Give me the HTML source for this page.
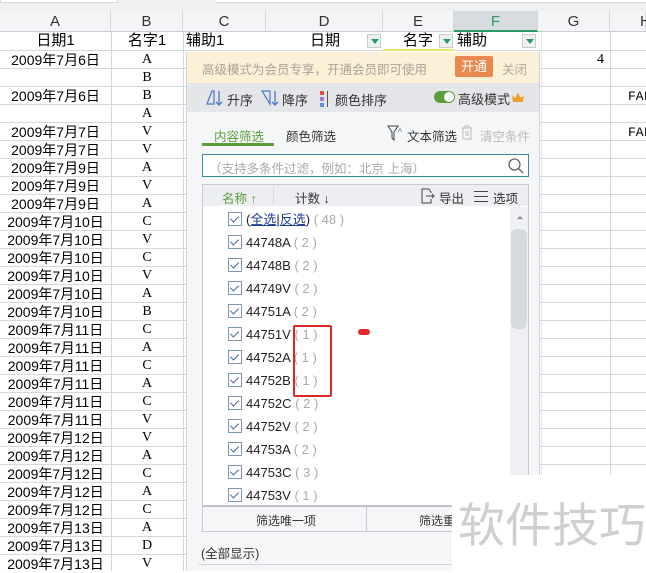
<!DOCTYPE html>
<html><head><meta charset="utf-8"><style>
*{margin:0;padding:0;box-sizing:border-box}
body{width:646px;height:571px;overflow:hidden;background:#fff;position:relative;font-family:"Liberation Sans","Noto Sans CJK SC",sans-serif;color:#000}
.a{position:absolute}
.top{left:0;top:0;width:646px;height:11px;background:#eef0f2}
.colh{top:11px;height:21px;background:#f4f5f7;border-right:1px solid #d6d8dc;border-bottom:1px solid #c9ccd2;font-size:15px;text-align:center;line-height:21px;color:#333}
.vl{top:32px;width:1px;height:539px;background:#d4d7dd}
.hl{left:0;width:646px;height:1px;background:#d4d7dd}
.cell{font-family:"Liberation Serif","Noto Serif CJK SC",serif;font-size:15px;line-height:18px;height:18px}
.d{left:0;width:111px;text-align:center;font-family:"Liberation Sans","Noto Sans CJK SC",sans-serif;font-size:14px}
.b{left:111px;width:72px;text-align:center;font-family:"Liberation Serif",serif;font-size:14px}
.h1{font-family:"Liberation Sans","Noto Sans CJK SC",sans-serif;font-size:15px}
.dd{width:14px;height:14px;background:#eef0f2;border:1px solid #c8ccd2}
.dd:after{content:"";position:absolute;left:3px;top:4px;border-left:4px solid transparent;border-right:4px solid transparent;border-top:5px solid #2a9a6a}
.panel{left:186px;top:52px;width:354px;height:519px;background:#f5f6f8;border-left:1px solid #d0d3d8;border-right:1px solid #d0d3d8;font-size:12.5px;color:#333}
.row{left:30px;height:23px;line-height:23px;font-size:13px;color:#222}
.cb{position:absolute;left:0;top:4px;width:14px;height:14px;border:1px solid #7e95b6;background:#fff}
.cb:after{content:"";position:absolute;left:3px;top:1px;width:4px;height:7px;border-right:1.6px solid #3f6ba8;border-bottom:1.6px solid #3f6ba8;transform:rotate(45deg)}
.row span.t{position:absolute;left:18px;white-space:nowrap}
.g{color:#aaa}
</style></head><body>
<div class="a top"></div>
<div class="a" style="left:0;top:0;width:118px;height:3px;background:#fff;border:1px solid #d6d8dc;border-top:0"></div>
<div class="a" style="left:216px;top:0;width:430px;height:3px;background:#fff;border-bottom:1px solid #d6d8dc"></div>

<div class="a colh" style="left:0;width:111px">A</div>
<div class="a colh" style="left:111px;width:72px">B</div>
<div class="a colh" style="left:183px;width:83px">C</div>
<div class="a colh" style="left:266px;width:117px">D</div>
<div class="a colh" style="left:383px;width:71px">E</div>
<div class="a colh" style="left:454px;width:84px;background:#d8dbe0;color:#2a9a6a;border-bottom:2px solid #2a9a6a">F</div>
<div class="a colh" style="left:538px;width:72px">G</div>
<div class="a colh" style="left:610px;width:36px;text-align:left;padding-left:30px">H</div>

<div class="a vl" style="left:111px"></div>
<div class="a vl" style="left:183px"></div>
<div class="a vl" style="left:610px"></div>
<div class="a vl" style="left:541px;background:#e6e8ec"></div>

<div class="a hl" style="top:50px"></div><div class="a hl" style="top:68px"></div><div class="a hl" style="top:86px"></div><div class="a hl" style="top:104px"></div><div class="a hl" style="top:122px"></div><div class="a hl" style="top:140px"></div><div class="a hl" style="top:158px"></div><div class="a hl" style="top:176px"></div><div class="a hl" style="top:194px"></div><div class="a hl" style="top:212px"></div><div class="a hl" style="top:230px"></div><div class="a hl" style="top:248px"></div><div class="a hl" style="top:266px"></div><div class="a hl" style="top:284px"></div><div class="a hl" style="top:302px"></div><div class="a hl" style="top:320px"></div><div class="a hl" style="top:338px"></div><div class="a hl" style="top:356px"></div><div class="a hl" style="top:374px"></div><div class="a hl" style="top:392px"></div><div class="a hl" style="top:410px"></div><div class="a hl" style="top:428px"></div><div class="a hl" style="top:446px"></div><div class="a hl" style="top:464px"></div><div class="a hl" style="top:482px"></div><div class="a hl" style="top:500px"></div><div class="a hl" style="top:518px"></div><div class="a hl" style="top:536px"></div><div class="a hl" style="top:554px"></div>

<div class="a cell h1" style="left:0;width:111px;top:32px;text-align:center">日期1</div>
<div class="a cell h1" style="left:111px;width:72px;top:32px;text-align:center">名字1</div>
<div class="a cell h1" style="left:186px;top:32px">辅助1</div>
<div class="a cell h1" style="left:310px;top:32px">日期</div>
<div class="a dd" style="left:367px;top:34px"></div>
<div class="a cell h1" style="left:403px;top:32px">名字</div>
<div class="a dd" style="left:439px;top:34px"></div>
<div class="a" style="left:383px;top:49px;width:71px;height:2px;background:#e8e86a"></div>
<div class="a cell h1" style="left:457px;top:32px">辅助</div>
<div class="a dd" style="left:522px;top:34px"></div>

<div class="a cell" style="left:597px;top:51px;font-size:14px">4</div>
<div class="a cell" style="left:628px;top:88px;font-family:'Liberation Mono',monospace;font-size:13px">FAL</div>
<div class="a cell" style="left:628px;top:124px;font-family:'Liberation Mono',monospace;font-size:13px">FAL</div>

<div class="a cell d" style="top:51px">2009年7月6日</div><div class="a cell b" style="top:51px">A</div>
<div class="a cell b" style="top:69px">B</div>
<div class="a cell d" style="top:87px">2009年7月6日</div><div class="a cell b" style="top:87px">B</div>
<div class="a cell b" style="top:105px">A</div>
<div class="a cell d" style="top:123px">2009年7月7日</div><div class="a cell b" style="top:123px">V</div>
<div class="a cell d" style="top:141px">2009年7月7日</div><div class="a cell b" style="top:141px">V</div>
<div class="a cell d" style="top:159px">2009年7月9日</div><div class="a cell b" style="top:159px">A</div>
<div class="a cell d" style="top:177px">2009年7月9日</div><div class="a cell b" style="top:177px">V</div>
<div class="a cell d" style="top:195px">2009年7月9日</div><div class="a cell b" style="top:195px">A</div>
<div class="a cell d" style="top:213px">2009年7月10日</div><div class="a cell b" style="top:213px">C</div>
<div class="a cell d" style="top:231px">2009年7月10日</div><div class="a cell b" style="top:231px">V</div>
<div class="a cell d" style="top:249px">2009年7月10日</div><div class="a cell b" style="top:249px">C</div>
<div class="a cell d" style="top:267px">2009年7月10日</div><div class="a cell b" style="top:267px">V</div>
<div class="a cell d" style="top:285px">2009年7月10日</div><div class="a cell b" style="top:285px">A</div>
<div class="a cell d" style="top:303px">2009年7月10日</div><div class="a cell b" style="top:303px">B</div>
<div class="a cell d" style="top:321px">2009年7月11日</div><div class="a cell b" style="top:321px">C</div>
<div class="a cell d" style="top:339px">2009年7月11日</div><div class="a cell b" style="top:339px">A</div>
<div class="a cell d" style="top:357px">2009年7月11日</div><div class="a cell b" style="top:357px">C</div>
<div class="a cell d" style="top:375px">2009年7月11日</div><div class="a cell b" style="top:375px">A</div>
<div class="a cell d" style="top:393px">2009年7月11日</div><div class="a cell b" style="top:393px">C</div>
<div class="a cell d" style="top:411px">2009年7月11日</div><div class="a cell b" style="top:411px">V</div>
<div class="a cell d" style="top:429px">2009年7月12日</div><div class="a cell b" style="top:429px">V</div>
<div class="a cell d" style="top:447px">2009年7月12日</div><div class="a cell b" style="top:447px">A</div>
<div class="a cell d" style="top:465px">2009年7月12日</div><div class="a cell b" style="top:465px">C</div>
<div class="a cell d" style="top:483px">2009年7月12日</div><div class="a cell b" style="top:483px">A</div>
<div class="a cell d" style="top:501px">2009年7月12日</div><div class="a cell b" style="top:501px">C</div>
<div class="a cell d" style="top:519px">2009年7月13日</div><div class="a cell b" style="top:519px">A</div>
<div class="a cell d" style="top:537px">2009年7月13日</div><div class="a cell b" style="top:537px">D</div>
<div class="a cell d" style="top:555px">2009年7月13日</div><div class="a cell b" style="top:555px">V</div>

<div class="a panel">
  <div class="a" style="left:0;top:0;width:352px;height:31px;background:#fcf1d6"></div>
  <div class="a" style="left:15px;top:7px;font-size:12.5px;color:#a9a39a">高级模式为会员专享，开通会员即可使用</div>
  <div class="a" style="left:268px;top:4px;width:38px;height:21px;background:#e9884f;color:#fff;border-radius:2px;text-align:center;line-height:21px;font-size:13px">开通</div>
  <div class="a" style="left:315px;top:7px;color:#b0aaa0;font-size:12.5px">关闭</div>

  <div class="a" style="left:0;top:31px;width:352px;height:29px;background:#e4e6ea"></div>
  <svg class="a" style="left:18px;top:36px" width="20" height="20" viewBox="0 0 20 20"><path d="M2 16 L7 3 L9 3 L9 16 Z" fill="none" stroke="#4b78c0" stroke-width="1.2"/><path d="M14 3 V17 M11 14 L14 17 L17 14" fill="none" stroke="#4b78c0" stroke-width="1.3"/></svg>
  <div class="a" style="left:40px;top:38px;font-size:13px">升序</div>
  <svg class="a" style="left:74px;top:36px" width="20" height="20" viewBox="0 0 20 20"><path d="M1 3 H9 V16 Z" fill="none" stroke="#4b78c0" stroke-width="1.2"/><path d="M14 3 V17 M11 14 L14 17 L17 14" fill="none" stroke="#4b78c0" stroke-width="1.3"/></svg>
  <div class="a" style="left:95px;top:38px;font-size:13px">降序</div>
  <div class="a" style="left:133px;top:39px;width:4px;height:4px;background:#e05050"></div>
  <div class="a" style="left:133px;top:45px;width:4px;height:4px;background:#9a7fd0"></div>
  <div class="a" style="left:133px;top:51px;width:4px;height:4px;background:#6090e0"></div>
  <div class="a" style="left:140px;top:39px;width:1px;height:16px;background:#555"></div>
  <div class="a" style="left:148px;top:38px;font-size:13px">颜色排序</div>
  <div class="a" style="left:247px;top:39px;width:21px;height:12px;border-radius:6px;background:#5a9e3a"></div>
  <div class="a" style="left:257px;top:40px;width:10px;height:10px;border-radius:5px;background:#fff"></div>
  <div class="a" style="left:271px;top:37px;font-size:13px">高级模式</div>
  <svg class="a" style="left:324px;top:40px" width="14" height="11" viewBox="0 0 14 11"><path d="M1 3 L4 6 L7 1 L10 6 L13 3 L12 10 H2 Z" fill="#f0a030"/></svg>

  <div class="a" style="left:27px;top:74px;font-size:12.5px;color:#5a9e3a">内容筛选</div>
  <div class="a" style="left:15px;top:91px;width:72px;height:3px;background:#5a9e3a"></div>
  <div class="a" style="left:99px;top:74px;font-size:12.5px">颜色筛选</div>
  <svg class="a" style="left:200px;top:72px" width="16" height="18" viewBox="0 0 16 18"><path d="M1 2 H11 L7 8 V16 L5 14 V8 Z" fill="none" stroke="#444" stroke-width="1"/><text x="11" y="8" font-size="6" fill="#4b78c0">A</text></svg>
  <div class="a" style="left:220px;top:74px;font-size:12.5px">文本筛选</div>
  <svg class="a" style="left:274px;top:73px" width="12" height="15" viewBox="0 0 12 15"><path d="M1 3 H11 M4 3 V1 H8 V3 M2 3 V14 H10 V3 M5 6 V11 M7 6 V11" fill="none" stroke="#bbb" stroke-width="1"/></svg>
  <div class="a" style="left:293px;top:74px;font-size:12.5px;color:#bbb">清空条件</div>

  <div class="a" style="left:15px;top:102px;width:327px;height:23px;background:#fff;border:1px solid #3a8a9a"></div>
  <div class="a" style="left:22px;top:106px;font-size:12.5px;color:#aaa">（支持多条件过滤，例如：北京 上海）</div>
  <svg class="a" style="left:320px;top:105px" width="18" height="18" viewBox="0 0 18 18"><circle cx="7.5" cy="7.5" r="5.5" fill="none" stroke="#666" stroke-width="1.3"/><path d="M11.5 11.5 L16 16" stroke="#666" stroke-width="1.4"/></svg>

  <div class="a" style="left:15px;top:132px;width:327px;height:322px;background:#fff;border:1px solid #c8ccd2"></div>
  <div class="a" style="left:16px;top:133px;width:325px;height:21px;background:#eceef1"></div>
  <div class="a" style="left:86px;top:134px;width:1px;height:19px;background:#d8dadf"></div>
  <div class="a" style="left:35px;top:136px;font-size:12.5px;color:#5a9e3a">名称 ↑</div>
  <div class="a" style="left:108px;top:136px;font-size:12.5px">计数 ↓</div>
  <svg class="a" style="left:233px;top:136px" width="16" height="16" viewBox="0 0 16 16"><path d="M9 1 H2 V15 H11 V11 M9 1 L11 4 V5 M6 8 H14 M12 6 L14 8 L12 10" fill="none" stroke="#444" stroke-width="1"/></svg>
  <div class="a" style="left:252px;top:136px;font-size:12.5px">导出</div>
  <div class="a" style="left:287px;top:139px;width:14px;height:1px;background:#444;box-shadow:0 5px 0 #444,0 10px 0 #444"></div>
  <div class="a" style="left:306px;top:136px;font-size:12.5px">选项</div>

  <div class="a" style="left:323px;top:155px;width:18px;height:299px;background:#eef0f3"></div>
  <div class="a" style="left:330px;top:164px;border-left:3px solid transparent;border-right:3px solid transparent;border-bottom:3px solid #888"></div>
  <div class="a" style="left:324px;top:177px;width:16px;height:100px;border-radius:6px;background:#d6d9de"></div>

  <div class="a row" style="left:41px;top:156px"><div class="cb"></div><span class="t">(<u style="color:#1a3e9a">全选</u>|<u style="color:#1a3e9a">反选</u>) <span class="g">( 48 )</span></span></div>
  <div class="a row" style="left:41px;top:179px"><div class="cb"></div><span class="t">44748A <span class="g">( 2 )</span></span></div>
  <div class="a row" style="left:41px;top:202px"><div class="cb"></div><span class="t">44748B <span class="g">( 2 )</span></span></div>
  <div class="a row" style="left:41px;top:225px"><div class="cb"></div><span class="t">44749V <span class="g">( 2 )</span></span></div>
  <div class="a row" style="left:41px;top:248px"><div class="cb"></div><span class="t">44751A <span class="g">( 2 )</span></span></div>
  <div class="a row" style="left:41px;top:271px"><div class="cb"></div><span class="t">44751V <span class="g">( 1 )</span></span></div>
  <div class="a row" style="left:41px;top:294px"><div class="cb"></div><span class="t">44752A <span class="g">( 1 )</span></span></div>
  <div class="a row" style="left:41px;top:317px"><div class="cb"></div><span class="t">44752B <span class="g">( 1 )</span></span></div>
  <div class="a row" style="left:41px;top:340px"><div class="cb"></div><span class="t">44752C <span class="g">( 2 )</span></span></div>
  <div class="a row" style="left:41px;top:363px"><div class="cb"></div><span class="t">44752V <span class="g">( 2 )</span></span></div>
  <div class="a row" style="left:41px;top:386px"><div class="cb"></div><span class="t">44753A <span class="g">( 2 )</span></span></div>
  <div class="a row" style="left:41px;top:409px"><div class="cb"></div><span class="t">44753C <span class="g">( 3 )</span></span></div>
  <div class="a row" style="left:41px;top:432px"><div class="cb"></div><span class="t">44753V <span class="g">( 1 )</span></span></div>

  <div class="a" style="left:15px;top:454px;width:327px;height:26px;border:1px solid #c8ccd2;border-top:1px solid #b8bcc2;background:#f5f6f8"></div>
  <div class="a" style="left:179px;top:455px;width:1px;height:24px;background:#c8ccd2"></div>
  <div class="a" style="left:69px;top:460px;font-size:12px">筛选唯一项</div>
  <div class="a" style="left:232px;top:460px;font-size:12px">筛选重复项</div>
  <div class="a" style="left:14px;top:491px;font-size:12.5px">(全部显示)</div>
  <div class="a" style="left:12px;top:512px;width:330px;height:1px;background:#d0d3d8"></div>
</div>

<div class="a" style="left:293px;top:325px;width:39px;height:72px;border:2.5px solid #d8292a;border-radius:2px"></div>
<div class="a" style="left:358px;top:329px;width:12px;height:6px;border-radius:3px;background:#e0282a"></div>

<div class="a" style="left:452px;top:475px;width:194px;height:96px;background:#fff"></div>
<div class="a" style="left:458px;top:494px;font-size:47px;color:#cfcfcf;font-family:'Noto Sans CJK SC',sans-serif;line-height:56px">软件技巧</div>
</body></html>
